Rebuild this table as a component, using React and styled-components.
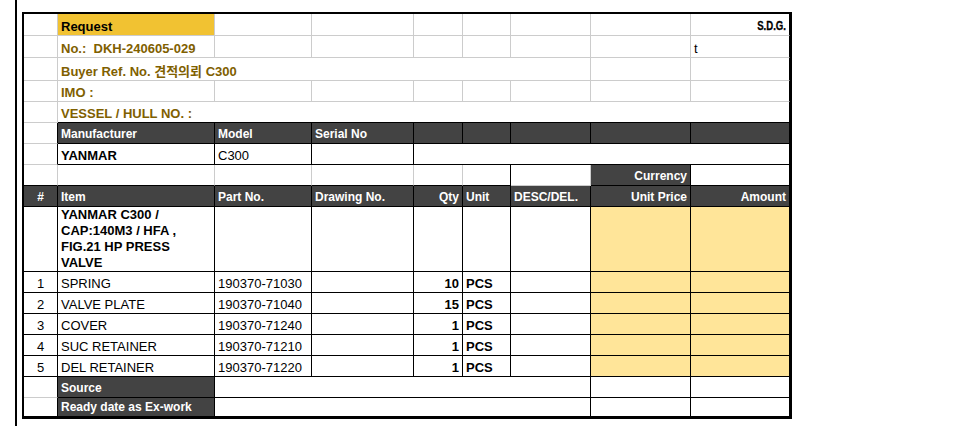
import React from 'react';
import styled, { createGlobalStyle, css } from 'styled-components';

const G = '#cccccc';
const K = '#000000';

const GlobalStyle = createGlobalStyle`
  html, body { margin: 0; padding: 0; background: #ffffff; }
  body { font-family: "Liberation Sans", Arial, "Noto Sans CJK KR", sans-serif; }
`;

const Page = styled.div`
  box-sizing: border-box;
  margin-left: 15px;
  min-height: 100vh;
  border-left: 2px solid #000;
  padding: 12px 0 0 5px;
`;

const Sheet = styled.div`
  display: grid;
  grid-template-columns: 34px 157px 97px 102px 49px 48px 80px 100px 99px;
  grid-template-rows: 22px 22px 23px repeat(6, 21px) 65px repeat(6, 21px) 19px;
  width: max-content;
  border: 2px solid #000;
  background: #ffffff;
`;

const tones = {
  dark: css`
    background: #434343;
    color: #ffffff;
    font-size: 12px;
    font-weight: 700;
    line-height: 14px;
    padding-bottom: 2px;
  `,
  gold: css`
    background: #f1c232;
  `,
  yellow: css`
    background: #ffe599;
  `,
};

const justify = { left: 'flex-start', center: 'center', right: 'flex-end' };

const Cell = styled.div`
  box-sizing: border-box;
  grid-column: span ${(p) => p.$span || 1};
  display: flex;
  align-items: flex-end;
  justify-content: ${(p) => justify[p.$align || 'left']};
  min-width: 0;
  overflow: hidden;
  padding: 0 3px 1px;
  border-right: 1px solid ${(p) => p.$r || K};
  border-bottom: 1px solid ${(p) => p.$b || K};
  font-size: 13px;
  line-height: 15px;
  font-weight: ${(p) => (p.$bold ? 700 : 400)};
  color: #000000;
  white-space: nowrap;
  ${(p) => p.$tone && tones[p.$tone]}
`;

const Label = styled.span`
  color: #7f6000;
  font-weight: 700;
  white-space: pre;
`;

const Sdg = styled.span`
  display: inline-block;
  font-family: "Liberation Sans Narrow", "Arial Narrow", "Liberation Sans", sans-serif;
  font-weight: 900;
  font-size: 12px;
  line-height: 14px;
  padding-bottom: 1px;
  color: #000;
  transform: scaleX(0.8);
  transform-origin: right bottom;
  -webkit-text-stroke: 0.3px #000;
`;

const Desc = styled(Cell)`
  align-items: flex-start;
  white-space: normal;
  line-height: 16px;
  padding: 0 3px;
`;

const Blanks = ({ n, r, b, tone }) =>
  Array.from({ length: n }, (_, i) => <Cell key={i} $r={r} $b={b} $tone={tone} />);

const items = [
  { no: 1, name: 'SPRING', part: '190370-71030', qty: 10 },
  { no: 2, name: 'VALVE PLATE', part: '190370-71040', qty: 15 },
  { no: 3, name: 'COVER', part: '190370-71240', qty: 1 },
  { no: 4, name: 'SUC RETAINER', part: '190370-71210', qty: 1 },
  { no: 5, name: 'DEL RETAINER', part: '190370-71220', qty: 1 },
];

export default function App() {
  return (
    <>
      <GlobalStyle />
      <Page>
        <Sheet>
          {/* Row 1 */}
          <Cell $r={G} $b={G} />
          <Cell $tone="gold" $bold $r={G} $b={G}>Request</Cell>
          <Blanks n={6} r={G} b={G} />
          <Cell $r={K} $b={G} $align="right"><Sdg>S.D.G.</Sdg></Cell>
          {/* Row 2 */}
          <Cell $r={G} $b={G} />
          <Cell $r={G} $b={G}><Label>{'No.:  DKH-240605-029'}</Label></Cell>
          <Blanks n={6} r={G} b={G} />
          <Cell $r={K} $b={G}>t</Cell>
          {/* Row 3 */}
          <Cell $r={G} $b={G} />
          <Cell $span={6} $r={G} $b={G}><Label>Buyer Ref. No. 견적의뢰 C300</Label></Cell>
          <Cell $r={G} $b={G} />
          <Cell $r={K} $b={G} />
          {/* Row 4 */}
          <Cell $r={G} $b={G} />
          <Cell $r={G} $b={G}><Label>IMO :</Label></Cell>
          <Blanks n={6} r={G} b={G} />
          <Cell $r={K} $b={G} />
          {/* Row 5 */}
          <Cell $r={G} $b={G} />
          <Cell $span={8}><Label>VESSEL / HULL NO. :</Label></Cell>
          {/* Row 6 */}
          <Cell $b={G} />
          <Cell $tone="dark">Manufacturer</Cell>
          <Cell $tone="dark">Model</Cell>
          <Cell $tone="dark">Serial No</Cell>
          <Blanks n={5} tone="dark" />
          {/* Row 7 */}
          <Cell $b={G} />
          <Cell $bold>YANMAR</Cell>
          <Cell>C300</Cell>
          <Cell />
          <Cell $span={5} />
          {/* Row 8 */}
          <Cell $r={G} />
          <Cell $r={G} />
          <Cell $r={G} />
          <Cell $r={G} />
          <Cell $r={G} />
          <Cell />
          <Cell $r={G} $b={G} />
          <Cell $tone="dark" $align="right">Currency</Cell>
          <Cell />
          {/* Row 9 */}
          <Cell $tone="dark" $align="center">#</Cell>
          <Cell $tone="dark">Item</Cell>
          <Cell $tone="dark">Part No.</Cell>
          <Cell $tone="dark">Drawing No.</Cell>
          <Cell $tone="dark" $align="right">Qty</Cell>
          <Cell $tone="dark">Unit</Cell>
          <Cell $tone="dark">DESC/DEL.</Cell>
          <Cell $tone="dark" $align="right">Unit Price</Cell>
          <Cell $tone="dark" $align="right">Amount</Cell>
          {/* Row 10 */}
          <Cell />
          <Desc $bold>YANMAR C300 / CAP:140M3 / HFA , FIG.21 HP PRESS VALVE</Desc>
          <Blanks n={5} />
          <Blanks n={2} tone="yellow" />
          {/* Item rows */}
          {items.map((it) => (
            <React.Fragment key={it.no}>
              <Cell $align="center">{it.no}</Cell>
              <Cell>{it.name}</Cell>
              <Cell>{it.part}</Cell>
              <Cell />
              <Cell $align="right" $bold>{it.qty}</Cell>
              <Cell $bold>PCS</Cell>
              <Cell />
              <Cell $tone="yellow" />
              <Cell $tone="yellow" />
            </React.Fragment>
          ))}
          {/* Footer rows */}
          <Cell $b={G} />
          <Cell $tone="dark">Source</Cell>
          <Cell $span={5} />
          <Cell />
          <Cell />
          <Cell />
          <Cell $tone="dark">Ready date as Ex-work</Cell>
          <Cell $span={5} />
          <Cell />
          <Cell />
        </Sheet>
      </Page>
    </>
  );
}
